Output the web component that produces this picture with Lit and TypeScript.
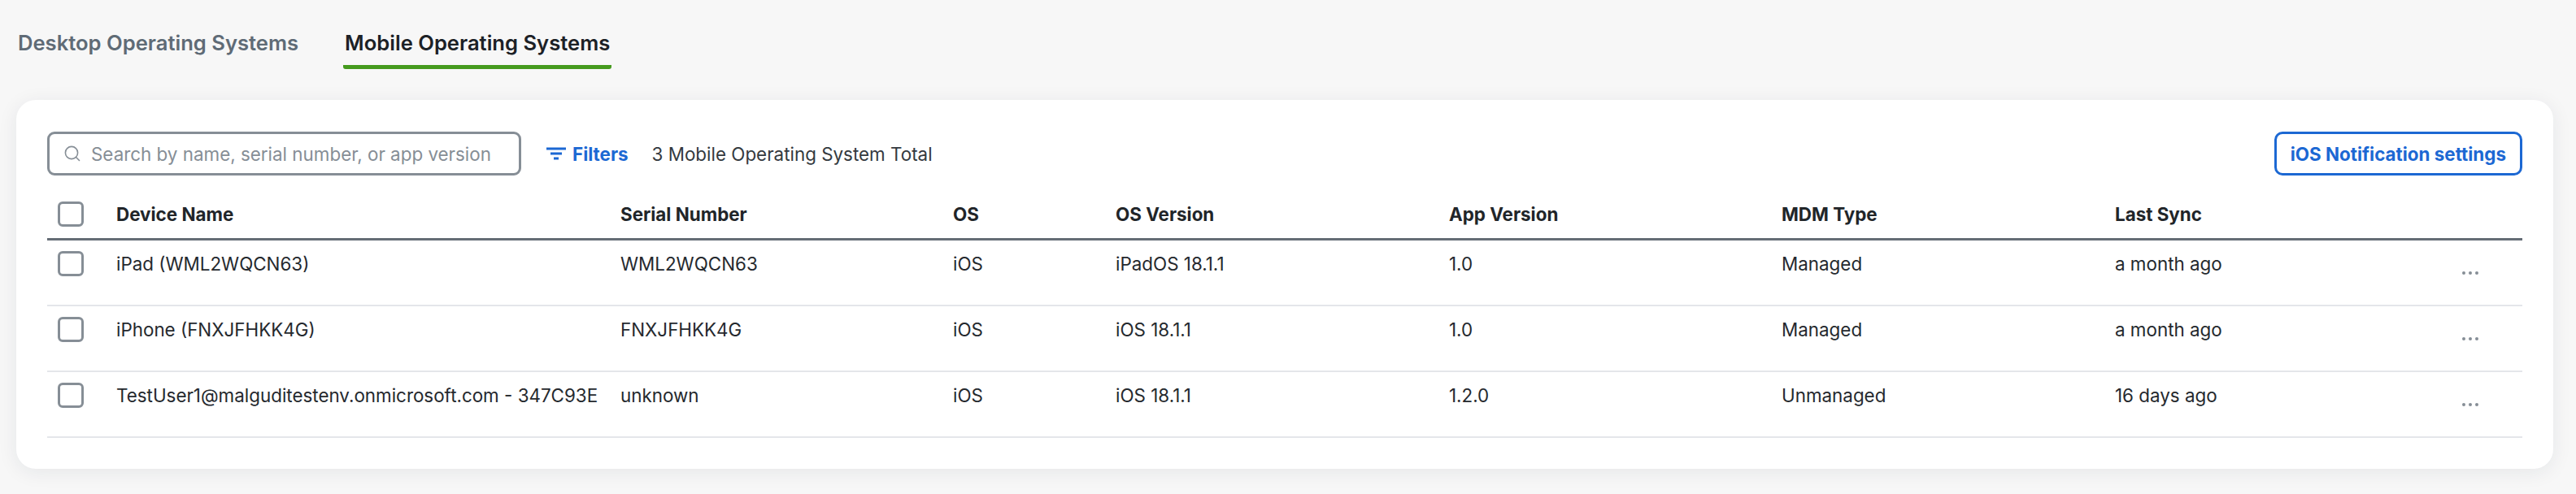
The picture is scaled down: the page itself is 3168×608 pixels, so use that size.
import { LitElement, html, css, svg } from "lit";
import { customElement } from "lit/decorators.js";

const rows = [
  ["iPad (WML2WQCN63)", "WML2WQCN63", "iOS", "iPadOS 18.1.1", "1.0", "Managed", "a month ago"],
  ["iPhone (FNXJFHKK4G)", "FNXJFHKK4G", "iOS", "iOS 18.1.1", "1.0", "Managed", "a month ago"],
  ["TestUser1@malguditestenv.onmicrosoft.com - 347C93E", "unknown", "iOS", "iOS 18.1.1", "1.2.0", "Unmanaged", "16 days ago"],
];
const heads = ["Device Name", "Serial Number", "OS", "OS Version", "App Version", "MDM Type", "Last Sync"];

@customElement("app-root")
export class AppRoot extends LitElement {
  static styles = css`
    :host { display: block; height: 608px; background: #f7f7f7; font-family: Inter, "Liberation Sans", sans-serif; color: #212529; overflow: hidden; }
    .tabs { display: flex; gap: 53px; padding: 33px 0 0 20px; height: 91px; box-sizing: border-box; }
    .tab { padding: 0 2px; height: 52px; box-sizing: border-box; font-size: 25.6px; line-height: 40px; font-weight: 600; color: #5f6b76; border-bottom: 5px solid transparent; }
    .tab.on { color: #1c2126; border-bottom-color: #459a1e; border-radius: 0 0 3px 3px; }
    .card { margin: 32px 28px 0 20px; height: 454px; box-sizing: border-box; padding: 39px 38px 0; background: #fff; border-radius: 24px; box-shadow: 0 4px 24px rgba(30, 40, 60, .08); }
    .toolbar { display: flex; align-items: center; height: 54px; }
    .search { display: flex; align-items: center; width: 583px; height: 54px; box-sizing: border-box; border: 3px solid #868e96; border-radius: 9px; padding-left: 18px; gap: 13px; font-size: 22.4px; color: #868e96; white-space: nowrap; }
    .search svg { width: 20px; height: 20px; flex: none; }
    .filters { display: flex; align-items: center; gap: 8px; margin-left: 31px; color: #1c68d3; font-size: 22.4px; font-weight: 700; }
    .filters svg { width: 24px; height: 16px; }
    .count { margin-left: 29px; font-size: 22.4px; color: #343a40; }
    .btn { margin-left: auto; height: 54px; box-sizing: border-box; display: flex; align-items: center; padding: 0 17px; border: 3px solid #1c68d3; border-radius: 10px; color: #1c68d3; font-size: 22.4px; font-weight: 700; background: #fff; }
    .row { display: grid; grid-template-columns: 85px 620px 409px 200px 410px 409px 410px 400px 1fr; }
    .head { height: 80px; border-bottom: 3px solid #656d76; box-sizing: border-box; align-items: center; padding-top: 18px; font-size: 22.4px; font-weight: 700; }
    .body { height: 81px; box-sizing: border-box; border-bottom: 2px solid #e4e6ea; padding-top: 13px; font-size: 22.4px; line-height: 32px; color: #25292e; }
    .box { display: block; width: 32px; height: 31px; margin-left: 13px; box-sizing: border-box; border: 3px solid #868e96; border-radius: 6px; background: #fff; }
    .dots { display: flex; gap: 4px; margin: 25px 0 0 27px; }
    .dots i { width: 4px; height: 4px; border-radius: 50%; background: #868e96; }
    .cell { white-space: nowrap; }
  `;

  render() {
    return html`
      <div class="tabs">
        <div class="tab">Desktop Operating Systems</div>
        <div class="tab on">Mobile Operating Systems</div>
      </div>
      <div class="card">
        <div class="toolbar">
          <div class="search">
            <svg viewBox="0 0 20 20" fill="none" stroke="#868e96" stroke-width="1.6" stroke-linecap="round">
              ${svg`<circle cx="9" cy="9" r="7.6"></circle><path d="M14.5 14.5l4 4"></path>`}
            </svg>
            <span>Search by name, serial number, or app version</span>
          </div>
          <div class="filters">
            <svg viewBox="0 0 24 16" fill="none" stroke="#1c68d3" stroke-width="3">
              ${svg`<path d="M0 2h24M5 8h14M9 14h6"></path>`}
            </svg>
            <span>Filters</span>
          </div>
          <div class="count">3 Mobile Operating System Total</div>
          <div class="btn">iOS Notification settings</div>
        </div>
        <div class="row head">
          <span class="box"></span>
          ${heads.map((h) => html`<span class="cell">${h}</span>`)}
        </div>
        ${rows.map(
          (r) => html`<div class="row body">
            <span class="box"></span>
            ${r.map((c) => html`<span class="cell">${c}</span>`)}
            <div class="dots"><i></i><i></i><i></i></div>
          </div>`
        )}
      </div>
    `;
  }
}
